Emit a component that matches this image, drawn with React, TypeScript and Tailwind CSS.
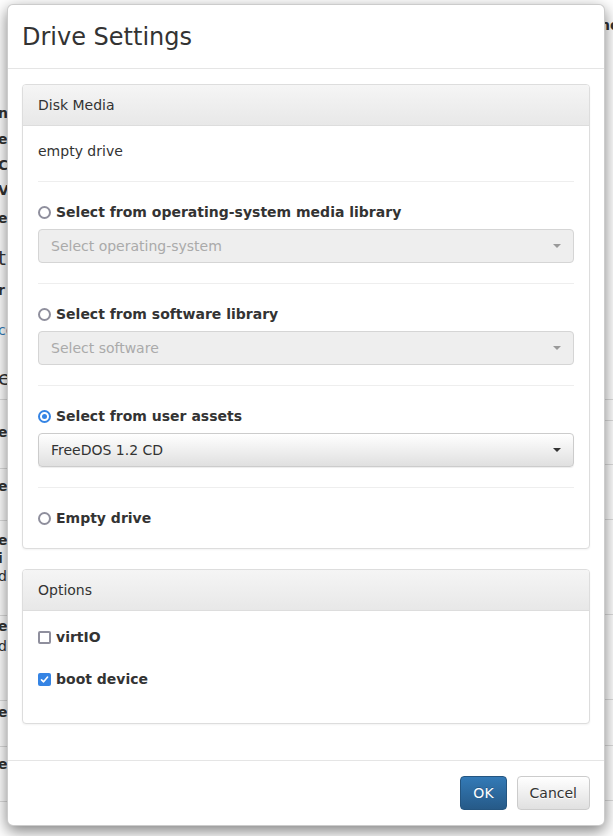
import React from "react";

type Bit = { box: string; text: string };

// fragments of the page that peek out left of the dialog
const leftTop: Bit[] = [
  { box: "mt-[103px] h-[20px] font-bold", text: "nr" },
  { box: "mt-[6px] h-[20px] font-bold", text: "e" },
  { box: "mt-[6px] h-[20px] font-bold", text: "C" },
  { box: "mt-[5px] h-[20px] font-bold", text: "Vi" },
  { box: "mt-[8px] h-[20px] font-bold", text: "e" },
  { box: "mt-[16px] h-[28px] text-[20px] leading-[28px]", text: "ti" },
  { box: "mt-[8px] h-[20px] font-bold", text: "r" },
  { box: "mt-[20px] h-[20px] text-[#337ab7]", text: "ce" },
  { box: "mt-[24px] h-[28px] text-[20px] leading-[28px]", text: "e" },
];

const leftRows: { box: string; bits: Bit[] }[] = [
  { box: "h-[69px]", bits: [{ box: "mt-[22px] h-[20px] font-bold", text: "e" }] },
  { box: "h-[52px]", bits: [{ box: "mt-[7px] h-[20px] font-bold", text: "e" }] },
  {
    box: "h-[95px] leading-[18px]",
    bits: [
      { box: "mt-[10px] h-[18px] font-bold", text: "e" },
      { box: "h-[18px] font-bold", text: "i" },
      { box: "h-[18px]", text: "d" },
    ],
  },
  {
    box: "h-[85px]",
    bits: [
      { box: "h-[20px] font-bold", text: "e" },
      { box: "h-[20px]", text: "d" },
    ],
  },
  { box: "h-[46px]", bits: [{ box: "mt-[1px] h-[20px] font-bold", text: "e" }] },
  { box: "h-[55px]", bits: [{ box: "mt-[7px] h-[20px] font-bold", text: "e" }] },
];

const rightRows = ["h-[21px]", "h-[44px]", "h-[55px]", "h-[95px]", "h-[85px]", "h-[46px]", "h-[55px]"];

function PageBehind() {
  return (
    <div className="absolute inset-0 flex justify-between text-[14px] leading-[20px] text-[#333]">
      <div className="flex w-[20px] flex-col overflow-hidden">
        <div className="flex h-[400px] flex-col border-b border-[#ddd]">
          {leftTop.map((b, i) => (
            <div key={i} className={`-ml-[2px] ${b.box}`}>
              {b.text}
            </div>
          ))}
        </div>
        {leftRows.map((r, i) => (
          <div key={i} className={`flex flex-col border-b border-[#ddd] ${r.box}`}>
            {r.bits.map((b, j) => (
              <div key={j} className={`-ml-[2px] ${b.box}`}>
                {b.text}
              </div>
            ))}
          </div>
        ))}
      </div>
      <div className="flex w-[20px] flex-col overflow-hidden">
        <div className="h-[400px] border-b border-[#ddd] pl-[7px] pt-[15px] font-bold">ne</div>
        {rightRows.map((h, i) => (
          <div key={i} className={`border-b border-[#ddd] ${h}`} />
        ))}
      </div>
    </div>
  );
}

function Caret({ muted }: { muted?: boolean }) {
  return (
    <span
      className={
        muted
          ? "h-0 w-0 border-x-[4px] border-t-[4px] border-x-transparent border-t-[#999]"
          : "h-0 w-0 border-x-[4px] border-t-[4px] border-x-transparent border-t-[#333]"
      }
    />
  );
}

function Picker({ label, disabled }: { label: string; disabled?: boolean }) {
  if (disabled) {
    return (
      <div className="mt-[7px] flex h-[34px] items-center justify-between rounded-[4px] border border-[#d5d5d5] bg-[#eee] px-[12px] text-[#aaa]">
        <span>{label}</span>
        <Caret muted />
      </div>
    );
  }
  return (
    <div className="mt-[7px] flex h-[34px] items-center justify-between rounded-[4px] border border-[#ccc] bg-linear-to-b from-white to-[#e0e0e0] px-[12px] text-[#333] shadow-[inset_0_1px_0_rgba(255,255,255,0.15),0_1px_1px_rgba(0,0,0,0.075)]">
      <span>{label}</span>
      <Caret />
    </div>
  );
}

function RadioDot({ on }: { on?: boolean }) {
  if (on) {
    return (
      <span className="flex h-[13px] w-[13px] shrink-0 items-center justify-center rounded-full border-2 border-[#3584e4] bg-white">
        <span className="h-[5px] w-[5px] rounded-full bg-[#3584e4]" />
      </span>
    );
  }
  return <span className="h-[13px] w-[13px] shrink-0 rounded-full border-2 border-[#8f8f9d] bg-white" />;
}

function CheckBox({ on }: { on?: boolean }) {
  if (on) {
    return (
      <span className="flex h-[13px] w-[13px] shrink-0 items-center justify-center rounded-[2px] bg-[#3584e4]">
        <svg width="9" height="9" viewBox="0 0 9 9" fill="none">
          <path d="M1.5 4.8 L3.6 6.8 L7.6 2" stroke="white" strokeWidth="1.6" strokeLinecap="round" strokeLinejoin="round" />
        </svg>
      </span>
    );
  }
  return <span className="h-[13px] w-[13px] shrink-0 rounded-[2px] border-2 border-[#8f8f9d] bg-white" />;
}

function Choice({ label, checked }: { label: string; checked?: boolean }) {
  return (
    <label className="flex h-[20px] items-center gap-[5px] font-bold">
      <RadioDot on={checked} />
      {label}
    </label>
  );
}

function Tick({ label, checked }: { label: string; checked?: boolean }) {
  return (
    <label className="flex h-[20px] items-center gap-[5px] font-bold">
      <CheckBox on={checked} />
      {label}
    </label>
  );
}

function Panel({ title, className, children }: { title: string; className?: string; children: React.ReactNode }) {
  return (
    <div className={`rounded-[4px] border border-[#ddd] bg-white shadow-[0_1px_2px_rgba(0,0,0,0.05)] ${className ?? ""}`}>
      <div className="flex h-[41px] items-center rounded-t-[3px] border-b border-[#ddd] bg-linear-to-b from-[#f5f5f5] to-[#e8e8e8] px-[15px]">
        {title}
      </div>
      {children}
    </div>
  );
}

const Rule = () => <hr className="my-[20px] border-0 border-t border-[#eee]" />;

export default function App() {
  return (
    <div className="relative h-[836px] w-[613px] overflow-hidden bg-white font-['DejaVu_Sans',sans-serif] text-[14px] leading-[20px] text-[#333]">
      <PageBehind />

      <div className="absolute left-[7px] top-[4px] w-[598px] rounded-[6px] border border-black/20 bg-white shadow-[0_5px_15px_rgba(0,0,0,0.5)]">
        <div className="flex h-[64px] items-center border-b border-[#e5e5e5] pl-[14px]">
          <h4 className="text-[24px] leading-[26px] font-normal">Drive Settings</h4>
        </div>

        <div className="px-[14px] pb-[36px] pt-[15px]">
          <Panel title="Disk Media">
            <div className="px-[15px] pb-[20px] pt-[15px]">
              <div>empty drive</div>
              <Rule />
              <Choice label="Select from operating-system media library" />
              <Picker label="Select operating-system" disabled />
              <Rule />
              <Choice label="Select from software library" />
              <Picker label="Select software" disabled />
              <Rule />
              <Choice label="Select from user assets" checked />
              <Picker label="FreeDOS 1.2 CD" />
              <Rule />
              <Choice label="Empty drive" />
            </div>
          </Panel>

          <Panel title="Options" className="mt-[20px]">
            <div className="flex flex-col gap-[22px] px-[15px] pb-[34px] pt-[16px]">
              <Tick label="virtIO" />
              <Tick label="boot device" checked />
            </div>
          </Panel>
        </div>

        <div className="flex justify-end gap-[10px] border-t border-[#e5e5e5] px-[14px] py-[15px]">
          <button className="h-[34px] rounded-[4px] border border-[#245580] bg-linear-to-b from-[#337ab7] to-[#265a88] px-[12px] text-white [text-shadow:0_-1px_0_rgba(0,0,0,0.2)]">
            OK
          </button>
          <button className="h-[34px] rounded-[4px] border border-[#ccc] bg-linear-to-b from-white to-[#e0e0e0] px-[12px] text-[#333] [text-shadow:0_1px_0_#fff]">
            Cancel
          </button>
        </div>
      </div>
    </div>
  );
}
